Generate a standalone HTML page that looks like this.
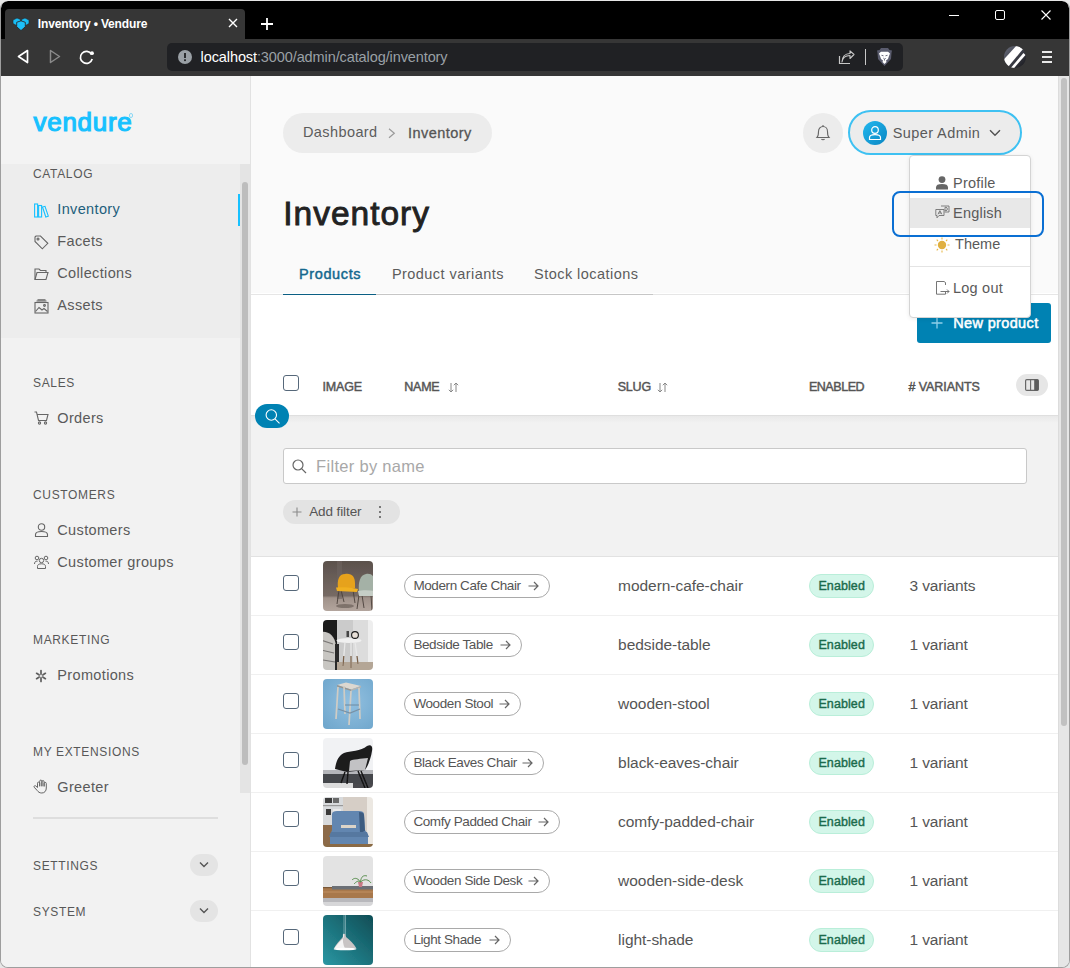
<!DOCTYPE html>
<html><head><meta charset="utf-8"><title>Inventory • Vendure</title>
<style>
html,body{margin:0;padding:0;}
body{width:1070px;height:968px;overflow:hidden;position:relative;background:#e6e6e6;font-family:"Liberation Sans", sans-serif;}
.t{position:absolute;line-height:1;white-space:nowrap;}
.r{position:absolute;}
svg.r{overflow:visible;}
</style></head><body>

<div class="r" style="left:0px;top:0.5px;width:1070px;height:967.5px;background:#9e9e9e;border-radius:8px;"></div>
<div style="position:absolute;left:0;top:0;width:1070px;height:968px;clip-path:inset(1px 1px 1px 1px round 7px);">
<div class="r" style="left:1px;top:1px;width:1068px;height:966px;background:#f2f2f2;"></div>
<div class="r" style="left:1px;top:1px;width:1068px;height:38px;background:#000;border-radius:7px 7px 0 0;"></div>
<div class="r" style="left:5px;top:9px;width:240px;height:30px;background:#363636;border-radius:4px 4px 0 0;"></div>
<div class="r" style="left:1px;top:39px;width:1068px;height:37px;background:#363636;"></div>
<svg class="r" style="left:10px;top:14px;" width="24" height="20" viewBox="0 0 24 20"><g fill="#18bdf5" stroke="#2a2a2a" stroke-width="0.6" stroke-linejoin="round"><path d="M3 6 L7 4 L10.5 5.5 L10.5 9 L6.5 11.5 L3 9.5Z"/><path d="M11.5 5.5 L15 4 L19 6 L19 9.5 L15.5 11.5 L11.5 9Z"/><path d="M11 6.8 L15.3 8.3 L15.3 12.8 L11 16.6 L6.7 12.8 L6.7 8.3Z" fill="#1cc0fa" stroke-width="0.9"/></g></svg>
<div class="t" style="left:37.8px;top:18.3px;font-size:12px;color:#ffffff;font-weight:700;letter-spacing:-0.15px;">Inventory • Vendure</div>
<svg class="r" style="left:228px;top:18px;" width="10" height="10" viewBox="0 0 10 10"><path d="M1 1L9 9M9 1L1 9" stroke="#fff" stroke-width="1.4"/></svg>
<svg class="r" style="left:260px;top:17px;" width="14" height="14" viewBox="0 0 14 14"><path d="M7 1V13M1 7H13" stroke="#fff" stroke-width="1.8"/></svg>
<div class="r" style="left:949px;top:15px;width:10px;height:1px;background:#fff;"></div>
<div class="r" style="left:995px;top:10px;width:10px;height:10px;border:1.2px solid #fff;border-radius:2px;box-sizing:border-box;"></div>
<svg class="r" style="left:1041px;top:10px;" width="10" height="10" viewBox="0 0 10 10"><path d="M0.5 0.5L9.5 9.5M9.5 0.5L0.5 9.5" stroke="#fff" stroke-width="1.1"/></svg>
<svg class="r" style="left:17px;top:49px;" width="12" height="15" viewBox="0 0 12 15"><path d="M10.5 1.5 L1.5 7.5 L10.5 13.5Z" fill="none" stroke="#fff" stroke-width="1.7" stroke-linejoin="round"/></svg>
<svg class="r" style="left:49px;top:49px;" width="12" height="15" viewBox="0 0 12 15"><path d="M1.5 1.5 L10.5 7.5 L1.5 13.5Z" fill="none" stroke="#8a8a8a" stroke-width="1.5" stroke-linejoin="round"/></svg>
<svg class="r" style="left:79px;top:50px;" width="16" height="15" viewBox="0 0 16 15"><path d="M12.5 4.2 A6 6 0 1 0 13.2 9" fill="none" stroke="#fff" stroke-width="1.7"/><circle cx="13" cy="3.2" r="1.9" fill="#fff"/></svg>
<div class="r" style="left:167px;top:43px;width:736px;height:28px;background:#202124;border-radius:5px;"></div>
<svg class="r" style="left:178px;top:50px;" width="14" height="14" viewBox="0 0 14 14"><circle cx="7" cy="7" r="7" fill="#9aa0a6"/><rect x="6.1" y="3" width="1.8" height="5" fill="#202124"/><rect x="6.1" y="9.3" width="1.8" height="1.8" fill="#202124"/></svg>
<div class="t" style="left:200.6px;top:50.0px;font-size:14.5px;color:#9aa0a6;letter-spacing:-0.1px"><span style="color:#fff">localhost</span>:3000/admin/catalog/inventory</div>
<svg class="r" style="left:838px;top:50px;" width="17" height="15" viewBox="0 0 17 15"><path d="M1.5 6 V13.5 H12" fill="none" stroke="#c8c8c8" stroke-width="1.2"/><path d="M4 12 C4.5 8 7.5 5.5 12 5.5 V8.5 L16 4.5 L12 0.8 V3.5 C7 3.5 4 7 4 12Z" fill="none" stroke="#c8c8c8" stroke-width="1.1" stroke-linejoin="round"/></svg>
<div class="r" style="left:865px;top:49px;width:1px;height:16px;background:#c8c8c8;"></div>
<svg class="r" style="left:877px;top:48px;" width="15" height="18" viewBox="0 0 15 18"><path d="M4 0 H11 L12.5 2 L15 2.5 L14.5 5 L14 11 L7.5 18 L1 11 L0.5 5 L0 2.5 L2.5 2Z" fill="#5a5c6e"/><path d="M2 5.5 L4 3.8 L11 3.8 L13 5.5 L12 8 L11 11 L9 12.5 L9.5 14 L7.5 16 L5.5 14 L6 12.5 L4 11 L3 8Z" fill="#fff"/><path d="M4.5 7.3 L6.5 7.8 M10.5 7.3 L8.5 7.8 M6.3 10 L7.5 11.2 L8.7 10 M7.5 11.2 V12.5" stroke="#5a5c6e" stroke-width="0.9" fill="none"/></svg>
<svg class="r" style="left:1004px;top:46px;" width="22" height="22" viewBox="0 0 22 22"><defs><clipPath id="cc"><circle cx="11" cy="11" r="11"/></clipPath><linearGradient id="eg" x1="0" y1="0" x2="1" y2="1"><stop offset="0" stop-color="#6a6e7e"/><stop offset="1" stop-color="#141418"/></linearGradient></defs><g clip-path="url(#cc)"><rect width="22" height="22" fill="url(#eg)"/><path d="M-2 15.5 L13 -1 L19 3 L4 21Z" fill="#fff"/><path d="M5 24 L19.5 7 L21.5 9 L7.5 25Z" fill="#fff"/></g></svg>
<div class="r" style="left:1042px;top:51px;width:10px;height:2px;background:#e8e8e8;"></div>
<div class="r" style="left:1042px;top:56px;width:10px;height:2px;background:#e8e8e8;"></div>
<div class="r" style="left:1042px;top:61px;width:10px;height:2px;background:#e8e8e8;"></div>
<div class="r" style="left:1px;top:76px;width:249px;height:891px;background:#f2f2f2;"></div>
<div class="r" style="left:1px;top:76px;width:249px;height:88px;background:#f3f3f3;"></div>
<div class="r" style="left:1px;top:164px;width:239px;height:174px;background:#ededed;"></div>
<div class="r" style="left:250px;top:76px;width:1px;height:891px;background:#e2e2e2;"></div>
<div class="r" style="left:240px;top:164px;width:10px;height:629px;background:#e4e4e4;"></div>
<div class="r" style="left:242px;top:182px;width:6px;height:583px;background:#bdbdbd;border-radius:3px;"></div>
<div class="r" style="left:238px;top:194px;width:2px;height:32px;background:#17c1ff;"></div>
<div class="t" style="left:33.6px;top:108.9px;font-size:26px;color:#17c1ff;font-weight:400;letter-spacing:0.7px;-webkit-text-stroke:1.2px #17c1ff;">vendure</div>
<div class="r" style="left:128.5px;top:113.2px;width:4.5px;height:4.5px;border:0.8px solid #8ad8f5;border-radius:50%;box-sizing:border-box"></div>
<div class="t" style="left:33.0px;top:168.3px;font-size:12px;color:#585858;font-weight:400;letter-spacing:0.65px;">CATALOG</div>
<div class="t" style="left:57.3px;top:201.8px;font-size:14.5px;color:#1e5f7c;font-weight:400;letter-spacing:0.35px;">Inventory</div>
<div class="t" style="left:57.3px;top:233.7px;font-size:14.5px;color:#5a5a5a;font-weight:400;letter-spacing:0.35px;">Facets</div>
<div class="t" style="left:57.3px;top:266.4px;font-size:14.5px;color:#5a5a5a;font-weight:400;letter-spacing:0.35px;">Collections</div>
<div class="t" style="left:57.3px;top:298.3px;font-size:14.5px;color:#5a5a5a;font-weight:400;letter-spacing:0.35px;">Assets</div>
<div class="t" style="left:33.0px;top:377.2px;font-size:12px;color:#585858;font-weight:400;letter-spacing:0.65px;">SALES</div>
<div class="t" style="left:57.3px;top:410.9px;font-size:14.5px;color:#5a5a5a;font-weight:400;letter-spacing:0.35px;">Orders</div>
<div class="t" style="left:33.0px;top:489.4px;font-size:12px;color:#585858;font-weight:400;letter-spacing:0.65px;">CUSTOMERS</div>
<div class="t" style="left:57.3px;top:523.1px;font-size:14.5px;color:#5a5a5a;font-weight:400;letter-spacing:0.35px;">Customers</div>
<div class="t" style="left:57.3px;top:554.8px;font-size:14.5px;color:#5a5a5a;font-weight:400;letter-spacing:0.35px;">Customer groups</div>
<div class="t" style="left:33.0px;top:633.8px;font-size:12px;color:#585858;font-weight:400;letter-spacing:0.65px;">MARKETING</div>
<div class="t" style="left:57.3px;top:667.5px;font-size:14.5px;color:#5a5a5a;font-weight:400;letter-spacing:0.35px;">Promotions</div>
<div class="t" style="left:33.0px;top:745.5px;font-size:12px;color:#585858;font-weight:400;letter-spacing:0.65px;">MY EXTENSIONS</div>
<div class="t" style="left:57.3px;top:779.5px;font-size:14.5px;color:#5a5a5a;font-weight:400;letter-spacing:0.35px;">Greeter</div>
<div class="r" style="left:33px;top:817px;width:185px;height:2px;background:#dedede;"></div>
<div class="t" style="left:33.0px;top:860.2px;font-size:12px;color:#585858;font-weight:400;letter-spacing:0.65px;">SETTINGS</div>
<div class="t" style="left:33.0px;top:906.1px;font-size:12px;color:#585858;font-weight:400;letter-spacing:0.65px;">SYSTEM</div>
<div class="r" style="left:190px;top:854px;width:28px;height:22px;background:#e4e4e4;border-radius:11px;"></div>
<div class="r" style="left:190px;top:900px;width:28px;height:22px;background:#e4e4e4;border-radius:11px;"></div>
<svg class="r" style="left:199px;top:861px;" width="10" height="7" viewBox="0 0 10 7"><path d="M1 1.5 L5 5.5 L9 1.5" fill="none" stroke="#555" stroke-width="1.4"/></svg>
<svg class="r" style="left:199px;top:907px;" width="10" height="7" viewBox="0 0 10 7"><path d="M1 1.5 L5 5.5 L9 1.5" fill="none" stroke="#555" stroke-width="1.4"/></svg>
<svg class="r" style="left:34px;top:203px;" width="15" height="15" viewBox="0 0 15 15"><g fill="none" stroke="#17c1ff" stroke-width="1.1"><rect x="0.6" y="1" width="3" height="13"/><rect x="4.6" y="2.5" width="3" height="11.5"/><path d="M8.5 4 L11 3.3 L14.3 13.2 L11.8 14Z"/></g></svg>
<svg class="r" style="left:34px;top:235px;" width="15" height="15" viewBox="0 0 15 15"><g fill="none" stroke="#666" stroke-width="1.1"><path d="M1 2 V6.5 L8.3 13.8 L13.8 8.3 L6.5 1 H2Z"/><circle cx="4" cy="4" r="1"/></g></svg>
<svg class="r" style="left:34px;top:267px;" width="15" height="14" viewBox="0 0 15 14"><g fill="none" stroke="#666" stroke-width="1.1"><path d="M1 12.5 V2 H5 L6.5 3.5 H12 V5.5"/><path d="M1 12.5 L3 5.5 H14 L12 12.5Z"/></g></svg>
<svg class="r" style="left:34px;top:299px;" width="15" height="15" viewBox="0 0 15 15"><g fill="none" stroke="#666" stroke-width="1.1"><rect x="1" y="3.5" width="13" height="10.5"/><path d="M2.5 2 H12.5 M3.5 0.8 H11.5"/><path d="M1.5 12.5 L5 8.5 L8 11 L10 9.5 L13.5 12.5"/><circle cx="10.5" cy="6.5" r="0.9"/></g></svg>
<svg class="r" style="left:34px;top:411px;" width="15" height="14" viewBox="0 0 15 14"><g fill="none" stroke="#666" stroke-width="1.1"><path d="M0.5 1 H2.5 L4.5 9.5 H12.5 L14 3.5 H3.5"/><circle cx="5.5" cy="12" r="1.1"/><circle cx="11.5" cy="12" r="1.1"/></g></svg>
<svg class="r" style="left:34px;top:523px;" width="15" height="14" viewBox="0 0 15 14"><g fill="none" stroke="#666" stroke-width="1.1"><circle cx="7.5" cy="4" r="3.2"/><path d="M1.5 13.5 V11.5 C1.5 9 3.5 8.5 7.5 8.5 C11.5 8.5 13.5 9 13.5 11.5 V13.5Z"/></g></svg>
<svg class="r" style="left:34px;top:555px;" width="15" height="14" viewBox="0 0 15 14"><g fill="none" stroke="#666" stroke-width="1"><circle cx="7.5" cy="5.5" r="2.2"/><circle cx="3" cy="3" r="1.8"/><circle cx="12" cy="3" r="1.8"/><path d="M3.5 13.5 V11.5 C3.5 9.5 5 8.8 7.5 8.8 C10 8.8 11.5 9.5 11.5 11.5 V13.5Z"/><path d="M0.5 9 C0.5 7 1.5 6 3.5 6.2 M14.5 9 C14.5 7 13.5 6 11.5 6.2"/></g></svg>
<svg class="r" style="left:34px;top:668px;" width="14" height="16" viewBox="0 0 14 16"><g stroke="#5e5e5e" stroke-width="1.7" stroke-linecap="round"><path d="M7 2.6V13.4M2.6 5.3L11.4 10.7M2.6 10.7L11.4 5.3"/></g><circle cx="7" cy="8" r="2.3" fill="#8a8a8a"/><circle cx="7" cy="8" r="1.1" fill="#f2f2f2"/></svg>
<svg class="r" style="left:33px;top:779px;" width="15" height="15" viewBox="0 0 15 15"><path d="M4.5 8.5 V4.2 A1.1 1.1 0 0 1 6.7 4.2 V7.5 M6.7 7 V2.2 A1.1 1.1 0 0 1 8.9 2.2 V7.5 M8.9 7 V2.7 A1.1 1.1 0 0 1 11.1 2.7 V7.5 M11.1 7.3 V4.5 A1.1 1.1 0 0 1 13.3 4.5 V9 C13.3 12 11.5 14 8.8 14 C6.5 14 5.3 13 4 11.3 L1.2 8.2 C0.6 7.4 1.5 6.3 2.6 6.8 L4.5 8.5" fill="none" stroke="#666" stroke-width="1" stroke-linejoin="round"/></svg>
<div class="r" style="left:251px;top:76px;width:807px;height:891px;background:#ffffff;"></div>
<div class="r" style="left:251px;top:76px;width:807px;height:217px;background:#fafafa;"></div>
<div class="r" style="left:1058px;top:76px;width:11px;height:891px;background:#e6e6e6;"></div>
<div class="r" style="left:1058px;top:76px;width:1px;height:891px;background:#dcdcdc;"></div>
<div class="r" style="left:1061px;top:78px;width:6px;height:648px;background:#c1c1c1;border-radius:3px;"></div>
<div class="r" style="left:283px;top:113px;width:209px;height:40px;background:#ececec;border-radius:20px;"></div>
<div class="t" style="left:303.0px;top:125.1px;font-size:14.5px;color:#5c5c5c;font-weight:400;letter-spacing:0.4px;">Dashboard</div>
<svg class="r" style="left:388px;top:127.5px;" width="8" height="11" viewBox="0 0 8 11"><path d="M1 0.8 L6.3 5.3 L1 9.8" fill="none" stroke="#9a9a9a" stroke-width="1.2"/></svg>
<div class="t" style="left:408.1px;top:125.7px;font-size:14.5px;color:#555555;font-weight:400;letter-spacing:0.45px;-webkit-text-stroke:0.3px #555;">Inventory</div>
<div class="r" style="left:803px;top:113px;width:40px;height:40px;background:#ececec;border-radius:50%;"></div>
<svg class="r" style="left:815px;top:124px;" width="16" height="18" viewBox="0 0 16 18"><g fill="none" stroke="#666" stroke-width="1.1"><path d="M2 13.5 C3.5 12 3.5 10.5 3.5 7.5 C3.5 4.5 5.5 2.5 8 2.5 C10.5 2.5 12.5 4.5 12.5 7.5 C12.5 10.5 12.5 12 14 13.5Z"/><path d="M8 1 V2.5 M6.5 15 C7 16 9 16 9.5 15"/></g></svg>
<div class="r" style="left:848px;top:110px;width:174px;height:45px;background:#ececec;border:2px solid #3ec1f2;border-radius:23px;box-sizing:border-box;"></div>
<div class="r" style="left:863px;top:121px;width:24px;height:24px;border-radius:50%;background:linear-gradient(135deg,#22b8ef,#0a86c2);"></div>
<svg class="r" style="left:868px;top:125px;" width="14" height="16" viewBox="0 0 14 16"><g fill="none" stroke="#fff" stroke-width="1.2"><circle cx="7" cy="5" r="3.3"/><path d="M1.5 14.5 V12.5 C1.5 10.5 3 9.6 7 9.6 C11 9.6 12.5 10.5 12.5 12.5 V14.5Z"/></g></svg>
<div class="t" style="left:892.8px;top:125.8px;font-size:14.5px;color:#5a5a5a;font-weight:400;letter-spacing:0.4px;">Super Admin</div>
<svg class="r" style="left:989px;top:129px;" width="12" height="8" viewBox="0 0 12 8"><path d="M1 1.2 L6 6.2 L11 1.2" fill="none" stroke="#555" stroke-width="1.5"/></svg>
<div class="t" style="left:283.2px;top:196.5px;font-size:33.5px;color:#222222;font-weight:400;letter-spacing:1.0px;-webkit-text-stroke:0.9px #222;">Inventory</div>
<div class="t" style="left:299.1px;top:266.8px;font-size:14.5px;color:#13688e;font-weight:400;letter-spacing:0.6px;-webkit-text-stroke:0.45px #13688e;">Products</div>
<div class="t" style="left:391.9px;top:266.8px;font-size:14.5px;color:#5c5c5c;font-weight:400;letter-spacing:0.45px;">Product variants</div>
<div class="t" style="left:534.1px;top:266.8px;font-size:14.5px;color:#5c5c5c;font-weight:400;letter-spacing:0.45px;">Stock locations</div>
<div class="r" style="left:251px;top:293px;width:807px;height:1px;background:#ffffff;"></div>
<div class="r" style="left:251px;top:294px;width:807px;height:1px;background:#e6e6e6;"></div>
<div class="r" style="left:283px;top:294px;width:370px;height:1.3000000000000114px;background:#c6c6c6;"></div>
<div class="r" style="left:283px;top:293.8px;width:93px;height:1.5px;background:#0b5f84;"></div>
<div class="r" style="left:917px;top:303px;width:134px;height:40px;background:#0082b3;border-radius:3px;"></div>
<svg class="r" style="left:931px;top:317px;" width="12" height="12" viewBox="0 0 12 12"><path d="M6 0.5V11.5M0.5 6H11.5" stroke="#8fd0ea" stroke-width="1.3"/></svg>
<div class="t" style="left:953.2px;top:315.9px;font-size:14.5px;color:#ffffff;font-weight:400;letter-spacing:0.36px;-webkit-text-stroke:0.5px #fff;">New product</div>
<div class="r" style="left:283px;top:375px;width:16px;height:16px;border:1.5px solid #56687a;border-radius:3px;box-sizing:border-box;background:#fff;"></div>
<div class="t" style="left:322.6px;top:380.6px;font-size:12.5px;color:#555555;font-weight:400;letter-spacing:-0.2px;-webkit-text-stroke:0.45px #555;">IMAGE</div>
<div class="t" style="left:404.2px;top:380.6px;font-size:12.5px;color:#555555;font-weight:400;letter-spacing:-0.2px;-webkit-text-stroke:0.45px #555;">NAME</div>
<div class="t" style="left:617.7px;top:380.6px;font-size:12.5px;color:#555555;font-weight:400;letter-spacing:-0.2px;-webkit-text-stroke:0.45px #555;">SLUG</div>
<div class="t" style="left:808.9px;top:380.6px;font-size:12.5px;color:#555555;font-weight:400;letter-spacing:-0.45px;-webkit-text-stroke:0.45px #555;">ENABLED</div>
<div class="t" style="left:908.4px;top:380.6px;font-size:12.5px;color:#555555;font-weight:400;letter-spacing:-0.05px;-webkit-text-stroke:0.45px #555;"># VARIANTS</div>
<svg class="r" style="left:448px;top:382px;" width="11" height="11" viewBox="0 0 11 11"><g fill="none" stroke="#888" stroke-width="1"><path d="M3 1V10M0.8 7.8L3 10L5.2 7.8"/><path d="M8 10V1M5.8 3.2L8 1L10.2 3.2"/></g></svg>
<svg class="r" style="left:657px;top:382px;" width="11" height="11" viewBox="0 0 11 11"><g fill="none" stroke="#888" stroke-width="1"><path d="M3 1V10M0.8 7.8L3 10L5.2 7.8"/><path d="M8 10V1M5.8 3.2L8 1L10.2 3.2"/></g></svg>
<div class="r" style="left:1016px;top:374px;width:32px;height:22px;background:#e6e6e6;border-radius:11px;"></div>
<svg class="r" style="left:1025px;top:379px;" width="14" height="12" viewBox="0 0 14 12"><rect x="0.6" y="0.6" width="12.8" height="10.8" rx="1.2" fill="none" stroke="#666" stroke-width="1.2"/><path d="M9.2 0.6 H12.2 A1.2 1.2 0 0 1 13.4 1.8 V10.2 A1.2 1.2 0 0 1 12.2 11.4 H9.2Z" fill="#5c5c5c"/><path d="M5.6 1V11" stroke="#666" stroke-width="1.1"/></svg>
<div class="r" style="left:251px;top:415px;width:807px;height:1px;background:#dfdfdf;"></div>
<div class="r" style="left:251px;top:416px;width:807px;height:140px;background:linear-gradient(#e9e9e9,#f2f2f2 7px);"></div>
<div class="r" style="left:251px;top:556px;width:807px;height:1px;background:#e2e2e2;"></div>
<div class="r" style="left:255px;top:404px;width:34px;height:24px;background:#0082b3;border-radius:12px;"></div>
<svg class="r" style="left:264px;top:408px;" width="18" height="18" viewBox="0 0 18 18"><circle cx="7.3" cy="7" r="5.2" fill="none" stroke="#fff" stroke-width="1.1"/><path d="M11 10.8L15.5 15.3" stroke="#fff" stroke-width="1.1"/></svg>
<div class="r" style="left:283px;top:448px;width:744px;height:36px;background:#fff;border:1px solid #c9c9c9;border-radius:3px;box-sizing:border-box;"></div>
<svg class="r" style="left:292px;top:459px;" width="15" height="15" viewBox="0 0 15 15"><circle cx="6" cy="6" r="5" fill="none" stroke="#666" stroke-width="1.2"/><path d="M9.6 9.6L14 14" stroke="#666" stroke-width="1.2"/></svg>
<div class="t" style="left:316.1px;top:458.1px;font-size:16.5px;color:#a8a8a8;font-weight:400;letter-spacing:0.3px;">Filter by name</div>
<div class="r" style="left:283px;top:500px;width:117px;height:24px;background:#e3e3e3;border-radius:12px;"></div>
<svg class="r" style="left:292px;top:507px;" width="10" height="10" viewBox="0 0 10 10"><path d="M5 0.5V9.5M0.5 5H9.5" stroke="#8a8a8a" stroke-width="1.1"/></svg>
<div class="t" style="left:309.2px;top:504.9px;font-size:13.5px;color:#555555;font-weight:400;letter-spacing:-0.1px;">Add filter</div>
<div class="r" style="left:379px;top:506px;width:2px;height:2px;background:#555;border-radius:1px;"></div>
<div class="r" style="left:379px;top:511px;width:2px;height:2px;background:#555;border-radius:1px;"></div>
<div class="r" style="left:379px;top:516px;width:2px;height:2px;background:#555;border-radius:1px;"></div>
<div class="r" style="left:283px;top:575px;width:16px;height:16px;border:1.5px solid #56687a;border-radius:3px;box-sizing:border-box;background:#fff;"></div>
<div class="r" style="left:404px;top:574px;width:146px;height:24px;border:1px solid #a9a9a9;border-radius:12px;box-sizing:border-box;"></div>
<div class="t" style="left:413.4px;top:579.2px;font-size:13.5px;color:#555555;font-weight:400;letter-spacing:-0.4px;">Modern Cafe Chair</div>
<svg class="r" style="left:528px;top:581px;" width="11" height="10" viewBox="0 0 11 10"><path d="M0.5 5H10M6 1L10 5L6 9" fill="none" stroke="#666" stroke-width="1.2"/></svg>
<div class="t" style="left:618.1px;top:577.9px;font-size:15.5px;color:#555555;font-weight:400;letter-spacing:-0.05px;">modern-cafe-chair</div>
<div class="r" style="left:809px;top:574px;width:65px;height:24px;background:#d3f6e9;border:1px solid #b9eed9;border-radius:12px;box-sizing:border-box;"></div>
<div class="t" style="left:818.4px;top:580.1px;font-size:12.5px;color:#1b6b4c;font-weight:400;letter-spacing:0.1px;-webkit-text-stroke:0.4px #1b6b4c;">Enabled</div>
<div class="t" style="left:909.6px;top:577.6px;font-size:15.5px;color:#555555;font-weight:400;letter-spacing:-0.15px;">3 variants</div>
<div class="r" style="left:251px;top:615px;width:807px;height:1px;background:#f0f0f0;"></div>
<div class="r" style="left:283px;top:634px;width:16px;height:16px;border:1.5px solid #56687a;border-radius:3px;box-sizing:border-box;background:#fff;"></div>
<div class="r" style="left:404px;top:633px;width:118px;height:24px;border:1px solid #a9a9a9;border-radius:12px;box-sizing:border-box;"></div>
<div class="t" style="left:413.4px;top:638.2px;font-size:13.5px;color:#555555;font-weight:400;letter-spacing:-0.4px;">Bedside Table</div>
<svg class="r" style="left:500px;top:640px;" width="11" height="10" viewBox="0 0 11 10"><path d="M0.5 5H10M6 1L10 5L6 9" fill="none" stroke="#666" stroke-width="1.2"/></svg>
<div class="t" style="left:618.1px;top:636.9px;font-size:15.5px;color:#555555;font-weight:400;letter-spacing:-0.05px;">bedside-table</div>
<div class="r" style="left:809px;top:633px;width:65px;height:24px;background:#d3f6e9;border:1px solid #b9eed9;border-radius:12px;box-sizing:border-box;"></div>
<div class="t" style="left:818.4px;top:639.1px;font-size:12.5px;color:#1b6b4c;font-weight:400;letter-spacing:0.1px;-webkit-text-stroke:0.4px #1b6b4c;">Enabled</div>
<div class="t" style="left:909.6px;top:636.6px;font-size:15.5px;color:#555555;font-weight:400;letter-spacing:-0.15px;">1 variant</div>
<div class="r" style="left:251px;top:674px;width:807px;height:1px;background:#f0f0f0;"></div>
<div class="r" style="left:283px;top:693px;width:16px;height:16px;border:1.5px solid #56687a;border-radius:3px;box-sizing:border-box;background:#fff;"></div>
<div class="r" style="left:404px;top:692px;width:117px;height:24px;border:1px solid #a9a9a9;border-radius:12px;box-sizing:border-box;"></div>
<div class="t" style="left:413.4px;top:697.2px;font-size:13.5px;color:#555555;font-weight:400;letter-spacing:-0.4px;">Wooden Stool</div>
<svg class="r" style="left:499px;top:699px;" width="11" height="10" viewBox="0 0 11 10"><path d="M0.5 5H10M6 1L10 5L6 9" fill="none" stroke="#666" stroke-width="1.2"/></svg>
<div class="t" style="left:618.1px;top:695.9px;font-size:15.5px;color:#555555;font-weight:400;letter-spacing:-0.05px;">wooden-stool</div>
<div class="r" style="left:809px;top:692px;width:65px;height:24px;background:#d3f6e9;border:1px solid #b9eed9;border-radius:12px;box-sizing:border-box;"></div>
<div class="t" style="left:818.4px;top:698.1px;font-size:12.5px;color:#1b6b4c;font-weight:400;letter-spacing:0.1px;-webkit-text-stroke:0.4px #1b6b4c;">Enabled</div>
<div class="t" style="left:909.6px;top:695.6px;font-size:15.5px;color:#555555;font-weight:400;letter-spacing:-0.15px;">1 variant</div>
<div class="r" style="left:251px;top:733px;width:807px;height:1px;background:#f0f0f0;"></div>
<div class="r" style="left:283px;top:752px;width:16px;height:16px;border:1.5px solid #56687a;border-radius:3px;box-sizing:border-box;background:#fff;"></div>
<div class="r" style="left:404px;top:751px;width:140px;height:24px;border:1px solid #a9a9a9;border-radius:12px;box-sizing:border-box;"></div>
<div class="t" style="left:413.4px;top:756.2px;font-size:13.5px;color:#555555;font-weight:400;letter-spacing:-0.4px;">Black Eaves Chair</div>
<svg class="r" style="left:522px;top:758px;" width="11" height="10" viewBox="0 0 11 10"><path d="M0.5 5H10M6 1L10 5L6 9" fill="none" stroke="#666" stroke-width="1.2"/></svg>
<div class="t" style="left:618.1px;top:754.9px;font-size:15.5px;color:#555555;font-weight:400;letter-spacing:-0.05px;">black-eaves-chair</div>
<div class="r" style="left:809px;top:751px;width:65px;height:24px;background:#d3f6e9;border:1px solid #b9eed9;border-radius:12px;box-sizing:border-box;"></div>
<div class="t" style="left:818.4px;top:757.1px;font-size:12.5px;color:#1b6b4c;font-weight:400;letter-spacing:0.1px;-webkit-text-stroke:0.4px #1b6b4c;">Enabled</div>
<div class="t" style="left:909.6px;top:754.6px;font-size:15.5px;color:#555555;font-weight:400;letter-spacing:-0.15px;">1 variant</div>
<div class="r" style="left:251px;top:792px;width:807px;height:1px;background:#f0f0f0;"></div>
<div class="r" style="left:283px;top:811px;width:16px;height:16px;border:1.5px solid #56687a;border-radius:3px;box-sizing:border-box;background:#fff;"></div>
<div class="r" style="left:404px;top:810px;width:156px;height:24px;border:1px solid #a9a9a9;border-radius:12px;box-sizing:border-box;"></div>
<div class="t" style="left:413.4px;top:815.2px;font-size:13.5px;color:#555555;font-weight:400;letter-spacing:-0.4px;">Comfy Padded Chair</div>
<svg class="r" style="left:538px;top:817px;" width="11" height="10" viewBox="0 0 11 10"><path d="M0.5 5H10M6 1L10 5L6 9" fill="none" stroke="#666" stroke-width="1.2"/></svg>
<div class="t" style="left:618.1px;top:813.9px;font-size:15.5px;color:#555555;font-weight:400;letter-spacing:-0.05px;">comfy-padded-chair</div>
<div class="r" style="left:809px;top:810px;width:65px;height:24px;background:#d3f6e9;border:1px solid #b9eed9;border-radius:12px;box-sizing:border-box;"></div>
<div class="t" style="left:818.4px;top:816.1px;font-size:12.5px;color:#1b6b4c;font-weight:400;letter-spacing:0.1px;-webkit-text-stroke:0.4px #1b6b4c;">Enabled</div>
<div class="t" style="left:909.6px;top:813.6px;font-size:15.5px;color:#555555;font-weight:400;letter-spacing:-0.15px;">1 variant</div>
<div class="r" style="left:251px;top:851px;width:807px;height:1px;background:#f0f0f0;"></div>
<div class="r" style="left:283px;top:870px;width:16px;height:16px;border:1.5px solid #56687a;border-radius:3px;box-sizing:border-box;background:#fff;"></div>
<div class="r" style="left:404px;top:869px;width:146px;height:24px;border:1px solid #a9a9a9;border-radius:12px;box-sizing:border-box;"></div>
<div class="t" style="left:413.4px;top:874.2px;font-size:13.5px;color:#555555;font-weight:400;letter-spacing:-0.4px;">Wooden Side Desk</div>
<svg class="r" style="left:528px;top:876px;" width="11" height="10" viewBox="0 0 11 10"><path d="M0.5 5H10M6 1L10 5L6 9" fill="none" stroke="#666" stroke-width="1.2"/></svg>
<div class="t" style="left:618.1px;top:872.9px;font-size:15.5px;color:#555555;font-weight:400;letter-spacing:-0.05px;">wooden-side-desk</div>
<div class="r" style="left:809px;top:869px;width:65px;height:24px;background:#d3f6e9;border:1px solid #b9eed9;border-radius:12px;box-sizing:border-box;"></div>
<div class="t" style="left:818.4px;top:875.1px;font-size:12.5px;color:#1b6b4c;font-weight:400;letter-spacing:0.1px;-webkit-text-stroke:0.4px #1b6b4c;">Enabled</div>
<div class="t" style="left:909.6px;top:872.6px;font-size:15.5px;color:#555555;font-weight:400;letter-spacing:-0.15px;">1 variant</div>
<div class="r" style="left:251px;top:910px;width:807px;height:1px;background:#f0f0f0;"></div>
<div class="r" style="left:283px;top:929px;width:16px;height:16px;border:1.5px solid #56687a;border-radius:3px;box-sizing:border-box;background:#fff;"></div>
<div class="r" style="left:404px;top:928px;width:107px;height:24px;border:1px solid #a9a9a9;border-radius:12px;box-sizing:border-box;"></div>
<div class="t" style="left:413.4px;top:933.2px;font-size:13.5px;color:#555555;font-weight:400;letter-spacing:-0.4px;">Light Shade</div>
<svg class="r" style="left:489px;top:935px;" width="11" height="10" viewBox="0 0 11 10"><path d="M0.5 5H10M6 1L10 5L6 9" fill="none" stroke="#666" stroke-width="1.2"/></svg>
<div class="t" style="left:618.1px;top:931.9px;font-size:15.5px;color:#555555;font-weight:400;letter-spacing:-0.05px;">light-shade</div>
<div class="r" style="left:809px;top:928px;width:65px;height:24px;background:#d3f6e9;border:1px solid #b9eed9;border-radius:12px;box-sizing:border-box;"></div>
<div class="t" style="left:818.4px;top:934.1px;font-size:12.5px;color:#1b6b4c;font-weight:400;letter-spacing:0.1px;-webkit-text-stroke:0.4px #1b6b4c;">Enabled</div>
<div class="t" style="left:909.6px;top:931.6px;font-size:15.5px;color:#555555;font-weight:400;letter-spacing:-0.15px;">1 variant</div>
<svg class="r" style="left:323px;top:561px;border-radius:4px;overflow:hidden" width="50" height="50" viewBox="0 0 50 50"><defs><filter id="bl0" x="-5%" y="-5%" width="110%" height="110%"><feGaussianBlur stdDeviation="0.6"/></filter></defs><g filter="url(#bl0)"><defs><linearGradient id="w0" x1="0" y1="0" x2="0" y2="1"><stop offset="0" stop-color="#5a504b"/><stop offset="0.68" stop-color="#766a64"/><stop offset="0.72" stop-color="#a0928a"/><stop offset="1" stop-color="#b6a8a0"/></linearGradient></defs><rect x="-2" y="-2" width="54" height="54" fill="url(#w0)"/><rect x="14" y="-2" width="5" height="40" fill="#6e6460" opacity="0.6"/><ellipse cx="22" cy="45" rx="9" ry="2" fill="#5a4e48" opacity="0.55"/><path d="M16 29 L14 43 M30 29 L32 42 M18 29 L21 41" stroke="#4a403a" stroke-width="0.9"/><path d="M15 27 C14 19 16 13 22 13 C29 12 32 16 32 22 L32 27Z" fill="#e6a21c"/><path d="M13 26.5 C17 26 28 26 35 28 L34 31 L14 30Z" fill="#f0b020"/><path d="M36 34 L34 48 M48 34 L49 50 M39 34 L41 47" stroke="#4a403a" stroke-width="0.9"/><path d="M36 31 C35 21 37 14 43 13 C49 12 51 16 52 20 L52 32Z" fill="#a4b1a6"/><path d="M35 30 C39 29 46 29 52 30 L52 35 L36 35Z" fill="#c6cec6"/></g></svg>
<svg class="r" style="left:323px;top:620px;border-radius:4px;overflow:hidden" width="50" height="50" viewBox="0 0 50 50"><defs><filter id="bl1" x="-5%" y="-5%" width="110%" height="110%"><feGaussianBlur stdDeviation="0.6"/></filter></defs><g filter="url(#bl1)"><rect x="-2" y="-2" width="54" height="54" fill="#cbcbcb"/><rect x="30" y="-2" width="22" height="54" fill="#dcdcdc"/><rect x="45" y="-2" width="7" height="54" fill="#eeeeee"/><rect x="-2" y="-2" width="16" height="26" fill="#1c1c1c"/><path d="M-2 12 C6 11 12 16 13 26 L14 50 H-2Z" fill="#c8c6c2"/><path d="M-2 20 L10 24 M-2 30 L11 33 M0 40 L12 42" stroke="#7a7876" stroke-width="1.2"/><rect x="12" y="24" width="4" height="26" fill="#2a2a2a"/><rect x="14" y="42" width="38" height="10" fill="#b4a696"/><ellipse cx="26" cy="20.5" rx="12.5" ry="2.5" fill="#f0f0f0"/><path d="M22 22 L20 46 M28 22 L28 48 M32 22 L35 44" stroke="#e8e8e8" stroke-width="1.3"/><path d="M20.8 36 L20 46 M28 36 L28 48 M34 36 L35 44" stroke="#7a6048" stroke-width="1.3"/><circle cx="32" cy="15" r="3.4" fill="#e8e0d8" stroke="#1a1a1a" stroke-width="1.1"/><rect x="23.5" y="11" width="2.5" height="6" fill="#444"/></g></svg>
<svg class="r" style="left:323px;top:679px;border-radius:4px;overflow:hidden" width="50" height="50" viewBox="0 0 50 50"><defs><filter id="bl2" x="-5%" y="-5%" width="110%" height="110%"><feGaussianBlur stdDeviation="0.6"/></filter></defs><g filter="url(#bl2)"><defs><radialGradient id="g2" cx="0.55" cy="0.45" r="0.7"><stop offset="0" stop-color="#92c0e0"/><stop offset="1" stop-color="#6ea6cc"/></radialGradient></defs><rect x="-2" y="-2" width="54" height="54" fill="url(#g2)"/><path d="M14 6 L23 3.5 L38 7 L28 10.5Z" fill="#ddd8d0"/><path d="M14 6 L28 10.5 L28 12 L14 7.5Z" fill="#9a958e"/><path d="M28 10.5 L38 7 L38 8.5 L28 12Z" fill="#b8b4ae"/><path d="M15 8 L13 40 M28 12 L26 46 M36 9 L37 40 M21 7 L22 35" stroke="#d0ccc4" stroke-width="1.7"/><path d="M15 30 L27 34 L37 30" stroke="#7890a4" stroke-width="1.3" fill="none"/><path d="M22 26 L36 26" stroke="#6e8aa0" stroke-width="1"/></g></svg>
<svg class="r" style="left:323px;top:738px;border-radius:4px;overflow:hidden" width="50" height="50" viewBox="0 0 50 50"><defs><filter id="bl3" x="-5%" y="-5%" width="110%" height="110%"><feGaussianBlur stdDeviation="0.6"/></filter></defs><g filter="url(#bl3)"><rect x="-2" y="-2" width="54" height="54" fill="#f1f2f4"/><rect x="-2" y="32" width="54" height="4" fill="#b5b6ba"/><rect x="-2" y="36" width="54" height="10" fill="#45464b"/><rect x="-2" y="46" width="54" height="6" fill="#4a4a4e"/><rect x="-2" y="45" width="32" height="7" fill="#dcdcdc"/><path d="M12 31 C13 24 15 18 21 15 C27 13 38 13 44 8 C48 6 50 8 49 13 C48 20 45 28 42 32 L24 34Z" fill="#1c1c1e"/><path d="M27 23 C30 21 38 21 45 20 L42 32 L26 33Z" fill="#c2c2c4"/><path d="M22 34 L18 45 M25 34 L24 46 M35 33 L42 50 M38 33 L45 50" stroke="#121212" stroke-width="1.4"/></g></svg>
<svg class="r" style="left:323px;top:797px;border-radius:4px;overflow:hidden" width="50" height="50" viewBox="0 0 50 50"><defs><filter id="bl4" x="-5%" y="-5%" width="110%" height="110%"><feGaussianBlur stdDeviation="0.6"/></filter></defs><g filter="url(#bl4)"><rect x="-2" y="-2" width="54" height="54" fill="#d6cec6"/><rect x="44" y="-2" width="8" height="54" fill="#ece8e2"/><rect x="-2" y="-2" width="22" height="32" fill="#d8dadc"/><rect x="2" y="1" width="7" height="5" fill="#3a3a3a"/><rect x="10" y="1" width="6" height="5" fill="#6a6a6a"/><rect x="3" y="12" width="5" height="6" fill="#3a3a3a"/><rect x="10" y="12" width="8" height="6" fill="#eaeaea"/><rect x="-2" y="8" width="22" height="1.2" fill="#9a9a9a"/><rect x="-2" y="28" width="12" height="24" fill="#8c6a48"/><path d="M9 17 C9 15 11 14 14 14 H36 C39 14 41 15 41 17 L42 33 L45 38 V47 H7 V38 L9 33Z" fill="#6286b0"/><path d="M36 15 C39 15 41 16 41 18 L42 34 L37 36Z" fill="#3e5c80"/><path d="M8 35 H44 L46 40 H6Z" fill="#5678a0"/><rect x="18" y="28" width="15" height="3" fill="#dcd4c8"/><rect x="-2" y="47" width="54" height="5" fill="#8a6a44"/></g></svg>
<svg class="r" style="left:323px;top:856px;border-radius:4px;overflow:hidden" width="50" height="50" viewBox="0 0 50 50"><defs><filter id="bl5" x="-5%" y="-5%" width="110%" height="110%"><feGaussianBlur stdDeviation="0.6"/></filter></defs><g filter="url(#bl5)"><rect x="-2" y="-2" width="54" height="54" fill="#e3e3e3"/><rect x="-2" y="31" width="54" height="11" fill="#a8784c"/><rect x="-2" y="31" width="54" height="1.2" fill="#7a5838"/><path d="M-2 36 H52" stroke="#c89868" stroke-width="0.8"/><rect x="9" y="30" width="43" height="3.5" fill="#6c7076"/><rect x="-2" y="42" width="54" height="10" fill="#b8b8bc"/><rect x="-2" y="46" width="54" height="6" fill="#d6d6d8"/><path d="M35 26 L40 26 L39 31 L36 31Z" fill="#c87a86"/><path d="M37.5 26 C34 21 31 22 29 24 M37.5 26 C38 20 41 19 44 20 M37.5 26 C42 22 46 24 48 27 M37.5 26 C35 24 33 26 31 28" stroke="#5a9050" stroke-width="1" fill="none"/></g></svg>
<svg class="r" style="left:323px;top:915px;border-radius:4px;overflow:hidden" width="50" height="50" viewBox="0 0 50 50"><defs><filter id="bl6" x="-5%" y="-5%" width="110%" height="110%"><feGaussianBlur stdDeviation="0.6"/></filter></defs><g filter="url(#bl6)"><defs><linearGradient id="g6" x1="1" y1="0" x2="0" y2="1"><stop offset="0" stop-color="#0e4a52"/><stop offset="1" stop-color="#2b9aa6"/></linearGradient></defs><rect x="-2" y="-2" width="54" height="54" fill="url(#g6)"/><path d="M21 -2 V20 M22.5 -2 V20" stroke="#bcd8dc" stroke-width="0.5"/><path d="M20 19 C22 18 23 20 23 22 C27 25 31 29 33.5 33.5 L11 33.5 C13 29 17 25 20 22Z" fill="#c8c4c4"/><path d="M20 19 C21 19 21 21 20.5 23 C17 26 14 30 11 33.5 L22 33.5 C20 30 19.5 25 20 19Z" fill="#f4f4f4"/><ellipse cx="22" cy="34" rx="11.5" ry="1.3" fill="#ffffff"/></g></svg>
<div class="r" style="left:909.3px;top:155px;width:121.4px;height:162.5px;background:#fff;border:1px solid #d4d4d4;border-radius:4px;box-sizing:border-box;box-shadow:0 1px 4px rgba(0,0,0,0.08)"></div>
<div class="r" style="left:910px;top:198px;width:120px;height:30px;background:#e8e8e8;"></div>
<div class="r" style="left:910px;top:266px;width:120px;height:1px;background:#e4e4e4;"></div>
<div class="t" style="left:953.1px;top:175.5px;font-size:14.5px;color:#5a5a5a;font-weight:400;letter-spacing:0.2px;">Profile</div>
<div class="t" style="left:953.1px;top:206.0px;font-size:14.5px;color:#5a5a5a;font-weight:400;letter-spacing:0.2px;">English</div>
<div class="t" style="left:955.1px;top:237.1px;font-size:14.5px;color:#5a5a5a;font-weight:400;letter-spacing:0.0px;">Theme</div>
<div class="t" style="left:953.1px;top:281.2px;font-size:14.5px;color:#5a5a5a;font-weight:400;letter-spacing:0.2px;">Log out</div>
<svg class="r" style="left:936px;top:176px;" width="12" height="14" viewBox="0 0 12 14"><circle cx="6" cy="3.6" r="3.4" fill="#666"/><path d="M0 13.5 V11.5 C0 9 2 8 6 8 C10 8 12 9 12 11.5 V13.5Z" fill="#666"/></svg>
<svg class="r" style="left:935px;top:205px;" width="15" height="14" viewBox="0 0 15 14"><g fill="none" stroke="#6a6a6a" stroke-width="0.85" stroke-linejoin="round"><path d="M6 1 H14 V7 H9.5"/><path d="M0.8 4.5 H9 V10.5 H4 L2 12.8 V10.5 H0.8Z"/><path d="M3 9.3 L4.9 5.6 L6.8 9.3 M3.7 8 H6.1"/><path d="M10 2.3 V5.7 H11 C12.8 5.7 12.8 2.3 11 2.3Z"/></g></svg>
<svg class="r" style="left:934px;top:237px;" width="17" height="16" viewBox="0 0 17 16"><circle cx="8" cy="8" r="4.2" fill="#e0b040"/><g stroke="#e8b848" stroke-width="1.1"><path d="M8 0.5V2.5M8 13.5V15.5M0.5 8H2.5M13.5 8H15.5M2.7 2.7L4 4M12 12L13.3 13.3M2.7 13.3L4 12M12 4L13.3 2.7"/></g></svg>
<svg class="r" style="left:936px;top:281px;" width="14" height="14" viewBox="0 0 14 14"><g fill="none" stroke="#666" stroke-width="0.9"><path d="M9.5 4 V1.5 L8 0.5 H0.5 V13.2 H9.5 V11"/><path d="M4.5 10.5 H13 M11 8.5 L13 10.5 L11 12.5"/></g></svg>
<div class="r" style="left:891.5px;top:191px;width:152px;height:45.6px;border:2.8px solid #0a6fd3;border-radius:8px;box-sizing:border-box"></div>
</div>
</body></html>
